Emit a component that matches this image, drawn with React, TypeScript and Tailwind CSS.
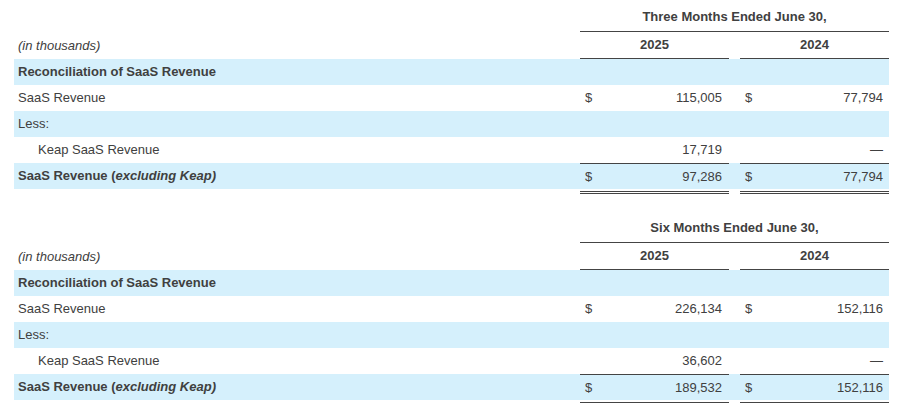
const blue = 'bg-[#d5f0fc]'

type Row = {
  label: React.ReactNode
  indent?: boolean
  bold?: boolean
  shaded?: boolean
  a?: string
  b?: string
  dollar?: boolean
  total?: boolean
}

const labelOf = (bold: boolean) =>
  bold ? 'font-bold' : ''

function Table({
  period,
  rows,
  doubleBottom,
}: {
  period: string
  rows: Row[]
  doubleBottom: boolean
}) {
  return (
    <div className="ml-[14px] w-[875px] grid grid-cols-[566px_149px_11px_149px]">
      {/* period header */}
      <div />
      <div className="col-span-3 h-[32px] flex items-end justify-center pb-[7px] border-b border-[#444] font-bold leading-[15px]">
        {period}
      </div>

      {/* years */}
      <div className="h-[27px] flex items-center pl-[4px] italic">(in thousands)</div>
      <div className="h-[27px] flex items-center justify-center border-b border-[#444] font-bold">2025</div>
      <div />
      <div className="h-[27px] flex items-center justify-center border-b border-[#444] font-bold">2024</div>

      {rows.map((r, i) => (
        <div
          key={i}
          className={`col-span-4 grid grid-cols-[566px_149px_11px_149px] h-[26px] ${r.shaded ? blue : ''}`}
        >
          <div className={`flex items-center ${r.indent ? 'pl-[24px]' : 'pl-[4px]'} ${labelOf(!!r.bold)}`}>
            {r.label}
          </div>
          <div className={`flex items-center justify-between pl-[5px] pr-[7px] ${r.total ? 'border-t border-[#444]' : ''}`}>
            <span>{r.dollar ? '$' : ''}</span>
            <span>{r.a ?? ''}</span>
          </div>
          <div />
          <div className={`flex items-center justify-between pl-[5px] pr-[6px] ${r.total ? 'border-t border-[#444]' : ''}`}>
            <span>{r.dollar ? '$' : ''}</span>
            <span>{r.b ?? ''}</span>
          </div>
        </div>
      ))}

      {/* closing rule */}
      <div />
      <div className={`mt-[2px] ${doubleBottom ? 'border-b-[3px] border-double' : 'border-b'} border-[#444]`} />
      <div />
      <div className={`mt-[2px] ${doubleBottom ? 'border-b-[3px] border-double' : 'border-b'} border-[#444]`} />
    </div>
  )
}

function rowsFor(saas: [string, string], keap: [string, string], net: [string, string]): Row[] {
  return [
    { label: 'Reconciliation of SaaS Revenue', bold: true, shaded: true },
    { label: 'SaaS Revenue', a: saas[0], b: saas[1], dollar: true },
    { label: 'Less:', shaded: true },
    { label: 'Keap SaaS Revenue', indent: true, a: keap[0], b: keap[1] },
    {
      label: (
        <span>
          SaaS Revenue (<span className="italic">excluding Keap)</span>
        </span>
      ),
      bold: true,
      shaded: true,
      a: net[0],
      b: net[1],
      dollar: true,
      total: true,
    },
  ]
}

export default function App() {
  return (
    <div className="w-[900px] h-[420px] bg-white text-[13px] text-[#404040] font-['Liberation_Sans',Arial,sans-serif] overflow-hidden">
      <Table
        period="Three Months Ended June 30,"
        rows={rowsFor(['115,005', '77,794'], ['17,719', '—'], ['97,286', '77,794'])}
        doubleBottom
      />
      <div className="h-[17px]" />
      <Table
        period="Six Months Ended June 30,"
        rows={rowsFor(['226,134', '152,116'], ['36,602', '—'], ['189,532', '152,116'])}
        doubleBottom={false}
      />
    </div>
  )
}
